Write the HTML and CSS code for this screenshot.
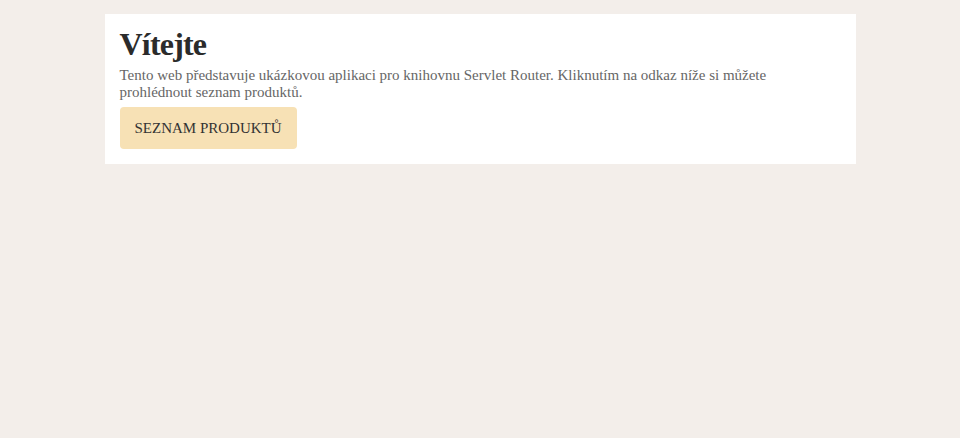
FILE: index.html
```html
<!DOCTYPE html>
<html lang="cs">
<head>
<meta charset="utf-8">
<title>Vítejte</title>
<link rel="stylesheet" href="styles.css">
</head>
<body>
<main class="card">
  <h1 class="title">Vítejte</h1>
  <p class="intro">Tento web představuje ukázkovou aplikaci pro knihovnu Servlet Router. Kliknutím na odkaz níže si můžete prohlédnout seznam produktů.</p>
  <a class="btn" href="#">Seznam produktů</a>
</main>
</body>
</html>
```
FILE: styles.css
```css
html, body {
  margin: 0;
  padding: 0;
  background: #f3eeea;
  font-family: "Liberation Serif", "Times New Roman", serif;
}
body {
  padding-top: 14px;
}
.card {
  display: flex;
  flex-direction: column;
  align-items: flex-start;
  width: 751px;
  box-sizing: border-box;
  margin: 0 auto;
  background: #fff;
  padding: 14px 15px 15px;
}
.title {
  margin: 0 0 7px;
  font-size: 32px;
  line-height: 32px;
  letter-spacing: -0.8px;
  color: #2b2b2b;
  font-weight: bold;
}
.intro {
  margin: 0 0 6px;
  max-width: 680px;
  font-size: 15px;
  line-height: 17px;
  color: #666;
}
.btn {
  display: inline-block;
  background: #f7e1b5;
  color: #333;
  text-decoration: none;
  text-transform: uppercase;
  font-size: 15px;
  line-height: 18px;
  padding: 12px 15px;
  border-radius: 4px;
}
```
